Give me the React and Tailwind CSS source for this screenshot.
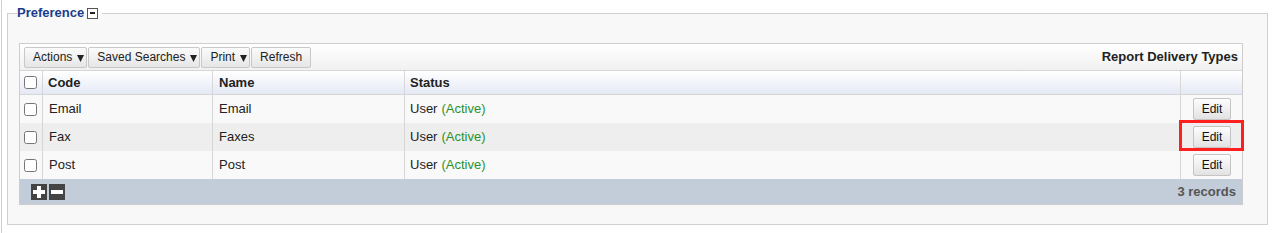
import React from 'react';

const rows = [
  { code: 'Email', name: 'Email' },
  { code: 'Fax', name: 'Faxes', marked: true },
  { code: 'Post', name: 'Post' },
];

const cols = 'grid grid-cols-[23px_170px_192px_776px_1fr]';

function ToolButton({ label, menu }) {
  return (
    <button className={`h-[21px] pl-[8px] ${menu ? 'pr-[2px]' : 'pr-[8px]'} flex items-center gap-[5px] border border-[#c8c8c8] rounded-[2px] bg-gradient-to-b from-[#fbfbfb] to-[#e6e6e6] text-[12px] text-[#222] leading-none`}>
      {label}
      {menu && (
        <svg width="7" height="8" viewBox="0 0 7 8" className="mt-[1px]">
          <path d="M0 1 L7 1 L3.5 8 Z" fill="#222" />
        </svg>
      )}
    </button>
  );
}

function Check() {
  return <input type="checkbox" className="w-[13px] h-[13px] m-0" />;
}

function SquareIcon({ minus }) {
  return (
    <span className="w-[16px] h-[16px] bg-[#444] flex items-center justify-center relative">
      <span className="w-[12px] h-[4px] bg-white" />
      {!minus && <span className="absolute w-[4px] h-[12px] bg-white" />}
    </span>
  );
}

export default function App() {
  return (
    <div className="h-[233px] bg-white pl-[1px] font-['Liberation_Sans',Arial,sans-serif] text-[13px] text-[#222]">
      <div className="h-full border-l border-[#cfcfcf] pl-[5px] pt-[5px]">
        <fieldset className="w-[1261px] border border-[#d0d0d0] bg-[#f8f8f8] pb-[19px]">
          <legend className="ml-[9px] pr-[4px] flex items-center gap-[3px]">
            <span className="font-bold text-[13px] text-[#1a3c8c] leading-[16px]">Preference</span>
            <span className="w-[11px] h-[11px] border border-[#555] bg-white flex items-center justify-center">
              <span className="w-[5px] h-[2px] bg-[#222]" />
            </span>
          </legend>

          <div className="ml-[11px] mt-[22px] w-[1224px] border border-[#cdcdcd]">
            <div className="h-[27px] flex items-center justify-between pl-[4px] pr-[4px] bg-gradient-to-b from-[#ffffff] to-[#f1f1f1] border-b border-[#d6d6d6]">
              <div className="flex items-center gap-[1px]">
                <ToolButton label="Actions" menu />
                <ToolButton label="Saved Searches" menu />
                <ToolButton label="Print" menu />
                <ToolButton label="Refresh" />
              </div>
              <span className="font-bold">Report Delivery Types</span>
            </div>

            <div className={`${cols} h-[24px] bg-gradient-to-b from-[#ffffff] to-[#e5e9f5] border-b border-[#d6d6d6] font-bold`}>
              <div className="border-r border-[#d6d6d6] flex items-center pl-[4px]"><Check /></div>
              <div className="border-r border-[#d6d6d6] flex items-center pl-[5px]">Code</div>
              <div className="border-r border-[#d6d6d6] flex items-center pl-[6px]">Name</div>
              <div className="border-r border-[#d6d6d6] flex items-center pl-[5px]">Status</div>
              <div />
            </div>

            {rows.map((r, i) => (
              <div key={r.code} className={`${cols} h-[28px] ${i % 2 ? 'bg-[#eeeeee]' : 'bg-[#f9f9f9]'}`}>
                <div className="border-r border-[#d6d6d6] flex items-center pl-[4px]"><Check /></div>
                <div className="border-r border-[#d6d6d6] flex items-center pl-[6px]">{r.code}</div>
                <div className="border-r border-[#d6d6d6] flex items-center pl-[6px]">{r.name}</div>
                <div className="border-r border-[#d6d6d6] flex items-center pl-[5px] gap-[4px]">
                  User <span className="text-[#28922c]">(Active)</span>
                </div>
                <div className="relative flex items-center justify-center pl-[1px]">
                  <button className="w-[38px] h-[22px] border border-[#c4c4c4] rounded-[2px] bg-gradient-to-b from-[#fdfdfd] to-[#e2e2e2] text-[12px] text-[#111]">
                    Edit
                  </button>
                  {r.marked && (
                    <span className="absolute left-[-2px] right-[-2px] top-[-3px] bottom-[0px] border-[3px] border-[#ff1f1f] pointer-events-none" />
                  )}
                </div>
              </div>
            ))}

            <div className="h-[25px] bg-[#c2cdd9] flex items-center justify-between pl-[11px] pr-[6px]">
              <div className="flex items-center gap-[2px]">
                <SquareIcon />
                <SquareIcon minus />
              </div>
              <span className="font-bold text-[#555]">3 records</span>
            </div>
          </div>
        </fieldset>
      </div>
    </div>
  );
}
